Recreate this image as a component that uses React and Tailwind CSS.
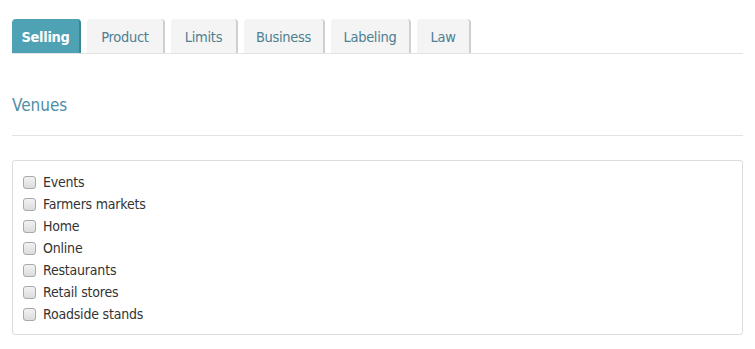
import React from 'react';

const tabs = [
  { name: 'Selling', w: 'w-[69px]' },
  { name: 'Product', w: 'w-[78px]' },
  { name: 'Limits', w: 'w-[67px]' },
  { name: 'Business', w: 'w-[81px]' },
  { name: 'Labeling', w: 'w-[80px]' },
  { name: 'Law', w: 'w-[54px]' },
];
const venues = ['Events', 'Farmers markets', 'Home', 'Online', 'Restaurants', 'Retail stores', 'Roadside stands'];

const App = () => {
  return (
    <div className="min-h-screen bg-white px-3 pt-[19px]" style={{ fontFamily: '"DejaVu Sans Condensed", "Liberation Sans", sans-serif' }}>
      <div className="flex gap-[6px] border-b border-[#e3e3e3]">
        {tabs.map((t, i) => (
          <div
            key={t.name}
            className={`${t.w} h-[34px] pt-[4px] flex items-center justify-center rounded-t-[4px] text-[14.5px] tracking-[-0.3px] border-r-[2px] ${
              i === 0
                ? 'bg-[#4fa1b4] border-[#3b8395] text-white font-bold'
                : 'bg-[#f4f4f4] border-[#cfcfcf] text-[#4d7f92]'
            }`}
          >
            {t.name}
          </div>
        ))}
      </div>

      <h2 className="mt-[43px] text-[17px] text-[#4f8ea6] leading-none">Venues</h2>
      <hr className="mt-[21px] border-[#e3e3e3]" />

      <div className="mt-[24px] border border-[#dcdcdc] rounded-[3px] pl-[10px] pt-[10px] pb-[9px]">
        {venues.map(v => (
          <label key={v} className="flex items-center h-[22px] text-[14px] tracking-[-0.2px] text-[#333]">
            <span className="w-[13px] h-[13px] rounded-[3px] border border-[#a9a9a9] bg-gradient-to-b from-[#f2f2f2] to-[#dcdcdc] mr-[7px]" />
            {v}
          </label>
        ))}
      </div>
    </div>
  );
};

export default App;
